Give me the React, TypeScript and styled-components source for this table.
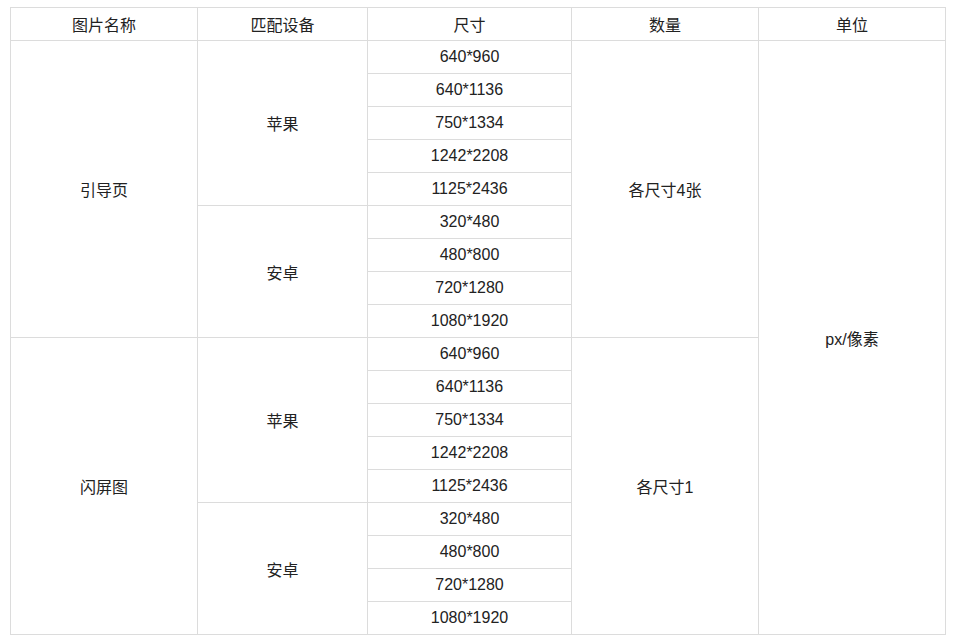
import React from 'react'
import styled, { createGlobalStyle } from 'styled-components'

const GlobalStyle = createGlobalStyle`
  body {
    margin: 0;
    background: #fff;
    font-family: "Liberation Sans", "Noto Sans CJK SC", sans-serif;
    color: #222;
  }
`

const Page = styled.div`
  padding: 7px 0 0 10px;
`

const Table = styled.table`
  border-collapse: collapse;
  width: 936px;
  table-layout: fixed;
  font-size: 16px;
`

const Head = styled.th`
  height: 32px;
  padding: 0;
  font-weight: normal;
  border: 1px solid #dcdcdc;
  text-align: center;
`

const Cell = styled.td`
  height: 32px;
  padding: 0;
  border: 1px solid #dcdcdc;
  text-align: center;
  vertical-align: middle;
`

const sizes = {
  apple: ['640*960', '640*1136', '750*1334', '1242*2208', '1125*2436'],
  android: ['320*480', '480*800', '720*1280', '1080*1920'],
}

const groups = [
  { name: '引导页', count: '各尺寸4张' },
  { name: '闪屏图', count: '各尺寸1' },
]

const perGroup = sizes.apple.length + sizes.android.length

const App: React.FC = () => {
  const rows: React.ReactNode[] = []
  groups.forEach((g, gi) => {
    const list = [
      ...sizes.apple.map((s, i) => ({ s, device: i === 0 ? '苹果' : null, span: sizes.apple.length })),
      ...sizes.android.map((s, i) => ({ s, device: i === 0 ? '安卓' : null, span: sizes.android.length })),
    ]
    list.forEach((item, i) => {
      rows.push(
        <tr key={`${gi}-${i}`}>
          {i === 0 && <Cell rowSpan={perGroup}>{g.name}</Cell>}
          {item.device && <Cell rowSpan={item.span}>{item.device}</Cell>}
          <Cell>{item.s}</Cell>
          {i === 0 && <Cell rowSpan={perGroup}>{g.count}</Cell>}
          {gi === 0 && i === 0 && <Cell rowSpan={perGroup * groups.length}>px/像素</Cell>}
        </tr>
      )
    })
  })

  return (
    <Page>
      <GlobalStyle />
      <Table>
        <colgroup>
          <col style={{ width: 187 }} />
          <col style={{ width: 170 }} />
          <col style={{ width: 204 }} />
          <col style={{ width: 187 }} />
          <col style={{ width: 187 }} />
        </colgroup>
        <thead>
          <tr>
            <Head>图片名称</Head>
            <Head>匹配设备</Head>
            <Head>尺寸</Head>
            <Head>数量</Head>
            <Head>单位</Head>
          </tr>
        </thead>
        <tbody>{rows}</tbody>
      </Table>
    </Page>
  )
}

export default App
